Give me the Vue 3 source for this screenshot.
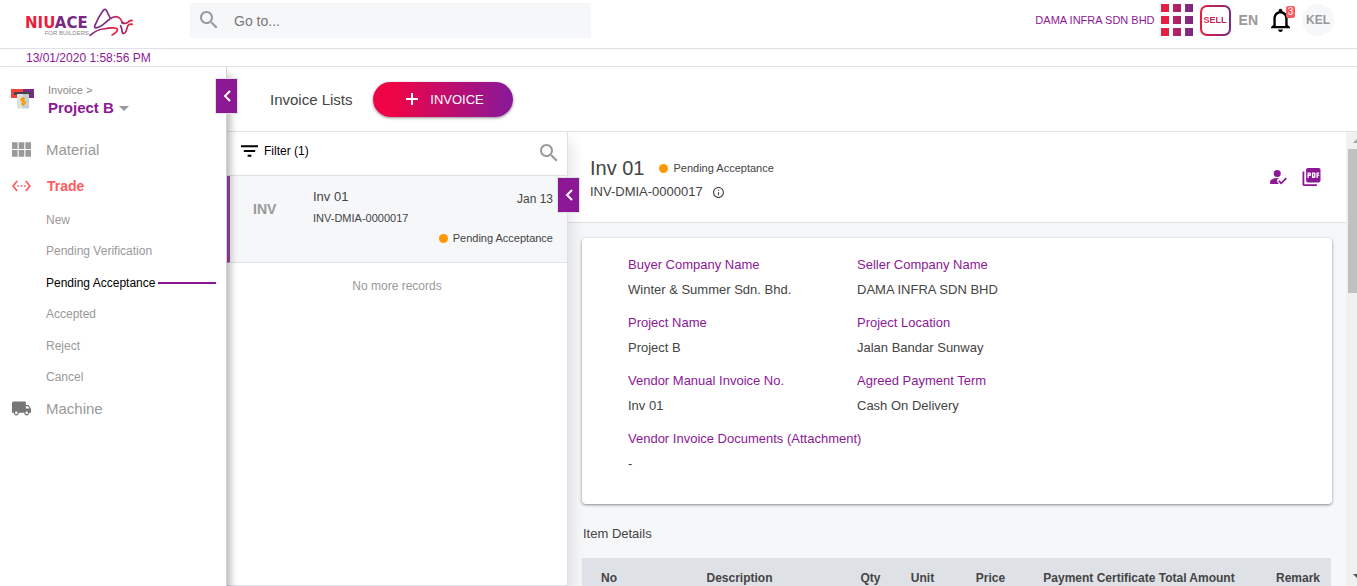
<script setup>
import { ref } from 'vue'

const query = ref('')
const statuses = ['New', 'Pending Verification', 'Pending Acceptance', 'Accepted', 'Reject', 'Cancel']
const current = ref('Pending Acceptance')
const fields = [
  ['Buyer Company Name', 'Winter & Summer Sdn. Bhd.'],
  ['Seller Company Name', 'DAMA INFRA SDN BHD'],
  ['Project Name', 'Project B'],
  ['Project Location', 'Jalan Bandar Sunway'],
  ['Vendor Manual Invoice No.', 'Inv 01'],
  ['Agreed Payment Term', 'Cash On Delivery'],
  ['Vendor Invoice Documents (Attachment)', '-'],
]
const columns = [
  ['No', 'no'],
  ['Description', 'description'],
  ['Qty', 'qty'],
  ['Unit', 'unit'],
  ['Price', 'price'],
  ['Payment Certificate Total Amount', 'total'],
  ['Remark', 'remark'],
]
const searchPath = 'M15.5 14h-.79l-.28-.27C15.41 12.59 16 11.11 16 9.5 16 5.91 13.09 3 9.5 3S3 5.91 3 9.5 5.91 16 9.5 16c1.61 0 3.09-.59 4.23-1.57l.27.28v.79l5 4.99L20.49 19l-4.99-5zm-6 0C7.01 14 5 11.99 5 9.5S7.01 5 9.5 5 14 7.01 14 9.5 11.99 14 9.5 14z'
</script>

<template>
  <div class="page">
    <header class="topbar">
      <a class="logo" href="#" aria-label="NIUACE for builders">
        <span class="wordmark">
          <span class="brand"><span class="red">NIU</span>ACE</span>
          <span class="tagline">FOR BUILDERS</span>
        </span>
        <svg class="bird" viewBox="268 14 134 90" fill="none" stroke-width="5" stroke-linecap="round" stroke-linejoin="round">
          <defs>
            <linearGradient id="wing" gradientUnits="userSpaceOnUse" x1="320" y1="0" x2="372" y2="0"><stop stop-color="#782a86" /><stop offset="1" stop-color="#ee1c3b" /></linearGradient>
            <linearGradient id="tail" gradientUnits="userSpaceOnUse" x1="272" y1="0" x2="345" y2="0"><stop stop-color="#782a86" /><stop offset="1" stop-color="#ee1c3b" /></linearGradient>
            <linearGradient id="beak" gradientUnits="userSpaceOnUse" x1="362" y1="0" x2="392" y2="0"><stop stop-color="#782a86" /><stop offset="1" stop-color="#ee1c3b" /></linearGradient>
          </defs>
          <path stroke="url(#wing)" d="M331 47 320 25Q316 17 309 26 296 43 285 70 282 78 291 76C308 72 318 58 330 50Q350 36 362 50 366 60 371 62" />
          <path stroke="url(#beak)" d="M397 54Q388 54 384 60 376 66 366 61 M397 66Q388 64 384 70L378 88Q373 96 368 92 366 88 366 80 364 74 362 70" />
          <path stroke="url(#tail)" d="M271 99Q290 82 310 80C330 76 352 74 353 82 352 89 346 93 337 98" />
        </svg>
      </a>
      <label class="search">
        <svg viewBox="0 0 24 24" class="icon"><path :d="searchPath" /></svg>
        <input v-model="query" type="text" placeholder="Go to..." aria-label="Go to" />
      </label>
      <div class="tools">
        <a class="company" href="#">DAMA INFRA SDN BHD</a>
        <button class="apps" aria-label="Apps"><i v-for="n in 9" :key="n"></i></button>
        <button class="sell"><span>SELL</span></button>
        <button class="lang">EN</button>
        <button class="bell" aria-label="Notifications">
          <svg viewBox="4 2 16 20"><path d="M12 22c1.1 0 2-.9 2-2h-4c0 1.1.9 2 2 2zm6-6v-5c0-3.07-1.63-5.64-4.5-6.32V4c0-.83-.67-1.5-1.5-1.5s-1.5.67-1.5 1.5v.68C7.64 5.36 6 7.92 6 11v5l-2 2v1h16v-1l-2-2zm-2 1H8v-6c0-2.48 1.51-4.5 4-4.5s4 2.02 4 4.5v6z" /></svg>
          <span class="badge">3</span>
        </button>
        <button class="avatar">KEL</button>
      </div>
    </header>
    <div class="clock">13/01/2020 1:58:56 PM</div>

    <div class="body">
      <aside class="sidebar">
        <div class="project">
          <svg class="invoice-icon" viewBox="0 0 24 22">
            <path fill="#f44336" d="M0 0h12v9H0z" /><path fill="#782a86" d="M12 0h11v9H12z" />
            <path fill="#48424f" d="M3 3h17v3H3z" />
            <path fill="#dce2e2" d="M6 5h6v15l-2-1-2 1-2-1z" /><path fill="#c5cfd0" d="M12 5h6v14l-2 1-2-1-2 1z" />
            <path fill="none" stroke="#ff9800" stroke-width="1.5" d="M14 9.5h-2.5q-1.500 0-1.500 1.200t1.500 1.300h1q1.500 0 1.500 1.500t-1.500 1.500H10M12 8v9" />
          </svg>
          <div>
            <div class="crumb">Invoice &gt;</div>
            <button class="project-name">Project B <i class="caret"></i></button>
          </div>
        </div>
        <nav>
          <a class="nav-item" href="#">
            <svg viewBox="4 5 17 13"><path d="M4 11h5V5H4v6zm0 7h5v-6H4v6zm6 0h5v-6h-5v6zm6 0h5v-6h-5v6zm-6-7h5V5h-5v6zm6-6v6h5V5h-5z" /></svg>Material
          </a>
          <a class="nav-item trade" href="#">
            <svg viewBox="1 5 22 14"><path d="M7.77 6.76L6.23 5.48.82 12l5.41 6.52 1.54-1.28L3.42 12l4.35-5.24zM7 13h2v-2H7v2zm10-2h-2v2h2v-2zm-6 2h2v-2h-2v2zm6.77-7.52l-1.54 1.28L20.58 12l-4.35 5.24 1.54 1.28L23.18 12l-5.41-6.52z" /></svg>Trade
          </a>
          <div class="subnav">
            <a v-for="s in statuses" :key="s" href="#" :class="{ active: s === current }" @click.prevent="current = s">{{ s }}</a>
          </div>
          <a class="nav-item machine" href="#">
            <svg viewBox="1 4 22 16"><path d="M20 8h-3V4H3c-1.100 0-2 .9-2 2v11h2c0 1.660 1.340 3 3 3s3-1.340 3-3h6c0 1.660 1.340 3 3 3s3-1.340 3-3h2v-5l-3-4zM6 18.500c-.83 0-1.500-.67-1.500-1.500s.67-1.500 1.500-1.500 1.500.67 1.500 1.500-.67 1.500-1.500 1.500zm13.500-9l1.960 2.500H17V9.500h2.500zm-1.500 9c-.83 0-1.500-.67-1.500-1.500s.67-1.500 1.500-1.500 1.500.67 1.500 1.500-.67 1.500-1.500 1.500z" /></svg>Machine
          </a>
        </nav>
        <button class="collapse side" aria-label="Collapse menu"><svg viewBox="0 0 8 12"><path d="M7 1 2 6l5 5" /></svg></button>
      </aside>

      <main class="content">
        <div class="toolbar">
          <h1>Invoice Lists</h1>
          <button class="create"><svg viewBox="0 0 14 14"><path d="M7 1v12M1 7h12" /></svg>INVOICE</button>
        </div>
        <div class="panes">
          <section class="list">
            <div class="filter">
              <button class="filter-button">
                <svg viewBox="3 6 18 12"><path d="M10 18h4v-2h-4v2zM3 6v2h18V6H3zm3 7h12v-2H6v2z" /></svg>Filter (1)
              </button>
              <button class="find" aria-label="Search invoices"><svg viewBox="0 0 24 24" class="icon"><path :d="searchPath" /></svg></button>
            </div>
            <article class="record">
              <strong class="kind">INV</strong>
              <div class="record-main">
                <div class="record-name">Inv 01</div>
                <div class="record-code">INV-DMIA-0000017</div>
              </div>
              <div class="record-date">Jan 13</div>
              <div class="status"><i class="dot"></i>Pending Acceptance</div>
            </article>
            <p class="end">No more records</p>
            <button class="collapse mid" aria-label="Collapse list"><svg viewBox="0 0 8 12"><path d="M7 1 2 6l5 5" /></svg></button>
          </section>

          <section class="detail">
            <div class="detail-head">
              <div>
                <div class="title-row"><h2>Inv 01</h2><span class="status"><i class="dot"></i>Pending Acceptance</span></div>
                <div class="code-row">INV-DMIA-0000017
                  <svg viewBox="2 2 20 20"><path d="M11 17h2v-6h-2v6zm1-15C6.480 2 2 6.480 2 12s4.480 10 10 10 10-4.480 10-10S17.520 2 12 2zm0 18c-4.410 0-8-3.590-8-8s3.590-8 8-8 8 3.590 8 8-3.590 8-8 8zM11 9h2V7h-2v2z" /></svg>
                </div>
              </div>
              <div class="actions">
                <button aria-label="Accept"><svg class="person" viewBox="3 4 20 17"><circle cx="11" cy="8" r="4" /><path d="M11 14.200c.9-.5 1.900-.9 2.700-1.100-.9-.1-1.900-.1-2.700-.1-2.670 0-8 1.340-8 4v3h10l-2-2.300zM20.600 12.500l-5.130 5.170-2.070-2.080L12 17l3.470 3.500L22 13.910z" /></svg></button>
                <button aria-label="PDF"><svg class="pdf" viewBox="2 2 20 20"><path d="M20 2H8c-1.100 0-2 .9-2 2v12c0 1.100.9 2 2 2h12c1.100 0 2-.9 2-2V4c0-1.100-.9-2-2-2zm-8.500 7.500c0 .83-.67 1.500-1.500 1.500H9v2H7.500V7H10c.83 0 1.500.67 1.500 1.500v1zm5 2c0 .83-.67 1.500-1.500 1.500h-2.500V7H15c.83 0 1.500.67 1.500 1.500v3zm4-3H19v1h1.500V11H19v2h-1.500V7h3v1.500zM9 9.500h1v-1H9v1zM4 6H2v14c0 1.100.9 2 2 2h14v-2H4V6zm10 5.500h1v-3h-1v3z" /></svg></button>
              </div>
            </div>
            <dl class="card">
              <div v-for="f in fields" :key="f[0]"><dt>{{ f[0] }}</dt><dd>{{ f[1] }}</dd></div>
            </dl>
            <h3>Item Details</h3>
            <table>
              <thead><tr><th v-for="c in columns" :key="c[0]" :class="c[1]">{{ c[0] }}</th></tr></thead>
            </table>
          </section>
          <div class="scrollbar"><i class="up"></i><i class="thumb"></i><i class="down"></i></div>
        </div>
      </main>
    </div>
  </div>
</template>

<style>
body { margin: 0; overflow: hidden; }
</style>

<style scoped>
* { box-sizing: border-box; }
.page { height: 100vh; display: flex; flex-direction: column; overflow: hidden; background: #fff; color: #444; font-family: "Liberation Sans", Arial, sans-serif; font-size: 13px; }
button { border: 0; padding: 0; margin: 0; background: none; font: inherit; color: inherit; cursor: pointer; }
a { color: inherit; text-decoration: none; }
svg { display: block; flex: none; fill: currentColor; }
h1, h2, h3, p, dl, dd { margin: 0; font-weight: normal; }
.icon { width: 24px; height: 24px; color: #999; }

.topbar { flex: none; height: 49px; display: flex; align-items: flex-start; border-bottom: 1px solid #dee1e6; }
.logo { width: 190px; display: flex; padding: 7px 0 0 25px; }
.wordmark { width: 64px; padding-top: 10px; display: flex; flex-direction: column; color: #782a86; }
.brand { font: bold 15px/13px "DejaVu Sans", sans-serif; }
.red { color: #ee1c3b; }
.tagline { align-self: flex-end; font-size: 6px; line-height: 6px; color: #888; white-space: nowrap; }
.bird { width: 45px; height: 30px; fill: none; }
.search { width: 401px; height: 35px; margin-top: 3px; padding-left: 7px; display: flex; align-items: center; gap: 13px; background: #f6f7f9; }
.search .icon { margin-bottom: 2px; }
.search input { flex: 1; min-width: 0; border: 0; outline: 0; padding: 0; background: none; font: 14px "Liberation Sans", Arial, sans-serif; color: #444; }
.search input::placeholder { color: #777; opacity: 1; }
.tools { margin-left: auto; padding: 4px 23px 0 0; height: 36px; display: flex; align-items: center; }
.company { font-size: 11px; color: #8c1896; margin-right: 6px; }
.apps { display: grid; grid-template-columns: repeat(3, 8px); gap: 4px; margin-right: 7px; }
.apps i { height: 8px; background: linear-gradient(90deg, #c02058, #a3246a); }
.apps i:nth-child(3n+1) { background: linear-gradient(90deg, #f01c3b, #e01d48); }
.apps i:nth-child(3n) { background: linear-gradient(90deg, #902878, #782a86); }
.sell { width: 31px; height: 31px; border: 2px solid transparent; border-radius: 7px; background: linear-gradient(#fff, #fff) padding-box, linear-gradient(90deg, #ee1c3b, #782a86) border-box; font-size: 9px; font-weight: bold; }
.sell span { background: linear-gradient(90deg, #e01d45, #a0246c); background-clip: text; color: transparent; }
.lang { margin-left: 8px; font-size: 14px; font-weight: bold; color: #999; }
.bell { position: relative; margin-left: 13px; color: #000; }
.bell svg { width: 19px; height: 24px; }
.badge { position: absolute; top: -2px; left: 15px; width: 9px; height: 12px; border-radius: 2px; background: #ff5a5f; color: #fff; font-size: 10px; line-height: 12px; }
.avatar { width: 32px; height: 32px; margin-left: 12px; border-radius: 50%; background: #f6f7f9; color: #999; font-size: 12px; font-weight: bold; }
.clock { flex: none; height: 18px; padding-left: 26px; border-bottom: 1px solid #dee1e6; color: #8c1896; font-size: 12px; line-height: 18px; }

.body { flex: 1; min-height: 0; display: flex; }
.sidebar { flex: none; position: relative; z-index: 3; width: 227px; border-right: 1px solid #ced1d6; background: #fff; box-shadow: 3px 8px 8px rgba(0, 0, 0, 0.3); }
.project { display: flex; height: 65px; padding: 16px 0 0 11px; gap: 13px; }
.invoice-icon { width: 24px; height: 22px; margin-top: 6px; }
.crumb { font-size: 11px; line-height: 15px; color: #888; }
.project-name { display: flex; align-items: center; gap: 5px; font-size: 15px; line-height: 20px; font-weight: bold; color: #8c1896; }
.caret { border: 5px solid transparent; border-top-color: #999; border-bottom: 0; }
.nav-item { display: flex; align-items: center; gap: 15px; height: 36px; padding-left: 12px; padding-bottom: 1px; font-size: 15px; color: #999; }
.nav-item svg { width: 19px; height: 15px; }
.trade { gap: 16px; padding-bottom: 0; font-size: 14px; font-weight: bold; color: #ff5a5f; }
.trade svg { height: 12px; }
.machine { height: 32px; }
.machine svg { color: #777; }
.subnav { display: grid; grid-auto-rows: 1fr; height: 189px; padding-left: 46px; font-size: 12px; color: #999; }
.subnav a { display: flex; align-items: center; }
.subnav .active { color: #000; }
.subnav .active::after { content: ""; flex: 1; height: 2px; margin: 0 10px 0 3px; background: #8c1896; }
.collapse { position: absolute; width: 23px; height: 36px; border: 1px solid #dee1e6; background: #8c1896; display: flex; align-items: center; justify-content: center; }
.collapse svg { width: 8px; height: 12px; fill: none; stroke: #fff; stroke-width: 2; }
.side { top: 11px; right: -12px; }
.mid { top: 45px; right: -13px; }

.content { flex: 1; min-width: 0; display: flex; flex-direction: column; }
.toolbar { flex: none; height: 65px; display: flex; align-items: center; gap: 20px; padding-left: 43px; border-bottom: 1px solid #dee1e6; }
h1 { font-size: 15px; }
.create { display: flex; align-items: center; justify-content: center; gap: 11px; width: 140px; height: 35px; padding-left: 4px; border-radius: 18px; background: linear-gradient(90deg, #ee0446 15%, #8c1896 95%); box-shadow: 0 1px 3px rgba(0, 0, 0, 0.45); color: #fff; font-size: 13px; }
.create svg { width: 14px; height: 14px; stroke: #fff; stroke-width: 2; }
.panes { flex: 1; min-height: 0; display: flex; overflow: hidden; }
.list { flex: none; position: relative; z-index: 2; width: 341px; border-right: 1px solid #dee1e6; border-bottom: 1px solid #dee1e6; background: #fff; box-shadow: 4px 8px 14px rgba(0, 0, 0, 0.1); }
.filter { height: 44px; display: flex; align-items: center; justify-content: space-between; padding: 0 6px 0 14px; border-bottom: 1px solid #dee1e6; color: #000; font-size: 12px; }
.filter-button { display: flex; align-items: center; gap: 6px; padding-bottom: 5px; }
.filter-button svg { width: 17px; height: 12px; }
.find { padding-bottom: 2px; }
.record { display: grid; grid-template-columns: 60px 1fr auto; align-content: start; height: 87px; padding: 12px 14px 0 23px; border-left: 3px solid #a347aa; border-bottom: 1px solid #dee1e6; background: #f6f7f9; }
.kind { font-size: 14px; line-height: 42px; color: #999; }
.record-name { font-size: 13px; line-height: 18px; }
.record-code { font-size: 11px; line-height: 24px; }
.record-date { font-size: 12px; line-height: 22px; }
.status { display: flex; align-items: center; gap: 5px; font-size: 11px; line-height: 16px; }
.record .status { grid-column: 1 / -1; justify-self: end; }
.dot { width: 9px; height: 9px; border-radius: 50%; background: #ff9800; }
.end { padding-top: 15px; text-align: center; font-size: 12px; line-height: 16px; color: #999; }

.detail { flex: 1; min-width: 0; overflow: hidden; background: #f6f7f9; }
.detail-head { height: 91px; display: flex; justify-content: space-between; align-items: flex-start; padding: 23px 25px 0 22px; border-bottom: 1px solid #dee1e6; background: #fff; }
.title-row { display: flex; align-items: center; gap: 15px; }
h2 { font-size: 20px; line-height: 26px; }
.code-row { display: flex; align-items: center; gap: 10px; font-size: 13px; line-height: 22px; }
.code-row svg { width: 11px; height: 11px; }
.actions { display: flex; align-items: center; gap: 14px; padding-top: 13px; color: #8c1896; }
.person { width: 18px; height: 15px; }
.pdf { width: 19px; height: 18px; }
.card { display: grid; grid-template-columns: 229px 1fr; row-gap: 17px; margin: 15px 14px 0; padding: 19px 16px 32px 46px; border-radius: 4px; background: #fff; box-shadow: 0 1px 3px rgba(0, 0, 0, 0.45); line-height: 16px; white-space: nowrap; }
dt { margin-bottom: 9px; color: #8c1896; }
h3 { margin: 22px 15px 16px; font-size: 13px; line-height: 16px; }
table { width: calc(100% - 29px); margin-left: 14px; table-layout: fixed; border-collapse: collapse; background: #dee1e6; }
th { height: 40px; padding: 0; font-size: 12px; white-space: nowrap; }
.no { width: 54px; }
.qty { width: 55px; }
.unit { width: 49px; }
.price { width: 87px; }
.total { width: 210px; }
.remark { width: 87px; padding-left: 21px; }
.scrollbar { flex: none; width: 11px; display: flex; flex-direction: column; align-items: flex-end; background: #f1f1f1; }
.up { margin: 7px 0 6px; border: 4px solid transparent; border-bottom-color: #a3a3a3; border-top: 0; border-right: 0; }
.thumb { width: 9px; height: 144px; background: #c1c1c1; }
.down { margin: auto 0 8px; border: 4px solid transparent; border-top-color: #505050; border-bottom: 0; border-right: 0; }
</style>
